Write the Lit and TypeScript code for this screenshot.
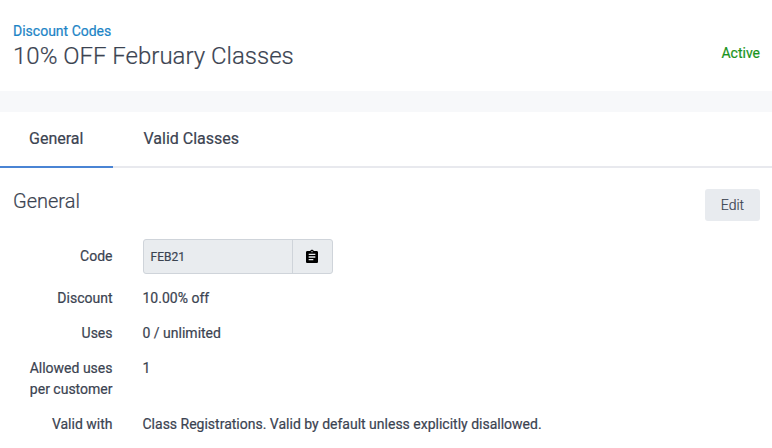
import { LitElement, html, css } from "lit";
import { customElement } from "lit/decorators.js";

@customElement("app-root")
export class AppRoot extends LitElement {
  static styles = css`
    :host { display: block; height: 448px; overflow: hidden; background: #fff; color: #3b4351; font: 400 14px/21px Roboto, sans-serif; -webkit-text-stroke: 0.2px currentColor; }
    * { box-sizing: border-box; }
    header { height: 91px; padding: 21px 12px 0 13px; display: flex; justify-content: space-between; }
    .crumb { color: #1c84c6; line-height: 20px; }
    h1 { margin: 0; font-size: 24px; font-weight: 300; line-height: 30px; }
    .status { color: #1a9420; margin-top: 22px; line-height: 20px; }
    .band { height: 21px; background: #f7f8fa; }
    nav { height: 56px; display: flex; border-bottom: 2px solid #e8e9ee; font-size: 16px; line-height: 54px; }
    .tab { height: 56px; padding: 0 30.5px; }
    .active { width: 113px; padding: 0 0 0 29px; border-bottom: 2px solid #4a84d4; }
    .title { display: flex; justify-content: space-between; padding: 21px 12px 0 13px; height: 71px; }
    h2 { margin: 0; font-size: 20px; line-height: 25px; font-weight: 300; }
    button { width: 55px; height: 32px; border: 0; border-radius: 3px; background: #e8ebef; color: #3b4351; font: 300 14px/32px Roboto, sans-serif; padding: 0; -webkit-text-stroke: 0.2px currentColor; }
    .row { display: grid; grid-template-columns: 112.5px 1fr; column-gap: 30px; margin-bottom: 14px; }
    .label { text-align: right; padding-left: 10px; }
    .coderow { align-items: center; }
    .code { width: 190px; height: 35px; display: flex; border: 1px solid #cfd4da; border-radius: 3px; background: #e9ecef; font-size: 12px; line-height: 34px; }
    .value { width: 148px; padding-left: 7px; }
    .copy { flex: 1; border-left: 1px solid #cfd4da; display: flex; align-items: center; padding-left: 11px; }
    svg { width: 16px; height: 16px; fill: #000; }
  `;
  render() {
    const rows = [
      [html`Discount`, "10.00% off"],
      [html`Uses`, "0 / unlimited"],
      [html`Allowed uses<br />per customer`, "1"],
      [html`Valid with`, "Class Registrations. Valid by default unless explicitly disallowed."],
    ];
    return html`
      <header>
        <div><div class="crumb">Discount Codes</div><h1>10% OFF February Classes</h1></div>
        <div class="status">Active</div>
      </header>
      <div class="band"></div>
      <nav><div class="tab active">General</div><div class="tab">Valid Classes</div></nav>
      <div class="title"><h2>General</h2><button>Edit</button></div>
      <div class="row coderow">
        <div class="label">Code</div>
        <div class="code"><div class="value">FEB21</div><div class="copy">
          <svg viewBox="0 0 24 24"><path d="M19 3h-4.18C14.4 1.84 13.3 1 12 1c-1.3 0-2.4.84-2.82 2H5c-1.1 0-2 .9-2 2v14c0 1.1.9 2 2 2h14c1.1 0 2-.9 2-2V5c0-1.1-.9-2-2-2zm-7 0c.55 0 1 .45 1 1s-.45 1-1 1-1-.45-1-1 .45-1 1-1zm2 14H7v-2h7v2zm3-4H7v-2h10v2zm0-4H7V7h10v2z"/></svg>
        </div></div>
      </div>
      ${rows.map(([l, v]) => html`<div class="row"><div class="label">${l}</div><div>${v}</div></div>`)}
    `;
  }
}
